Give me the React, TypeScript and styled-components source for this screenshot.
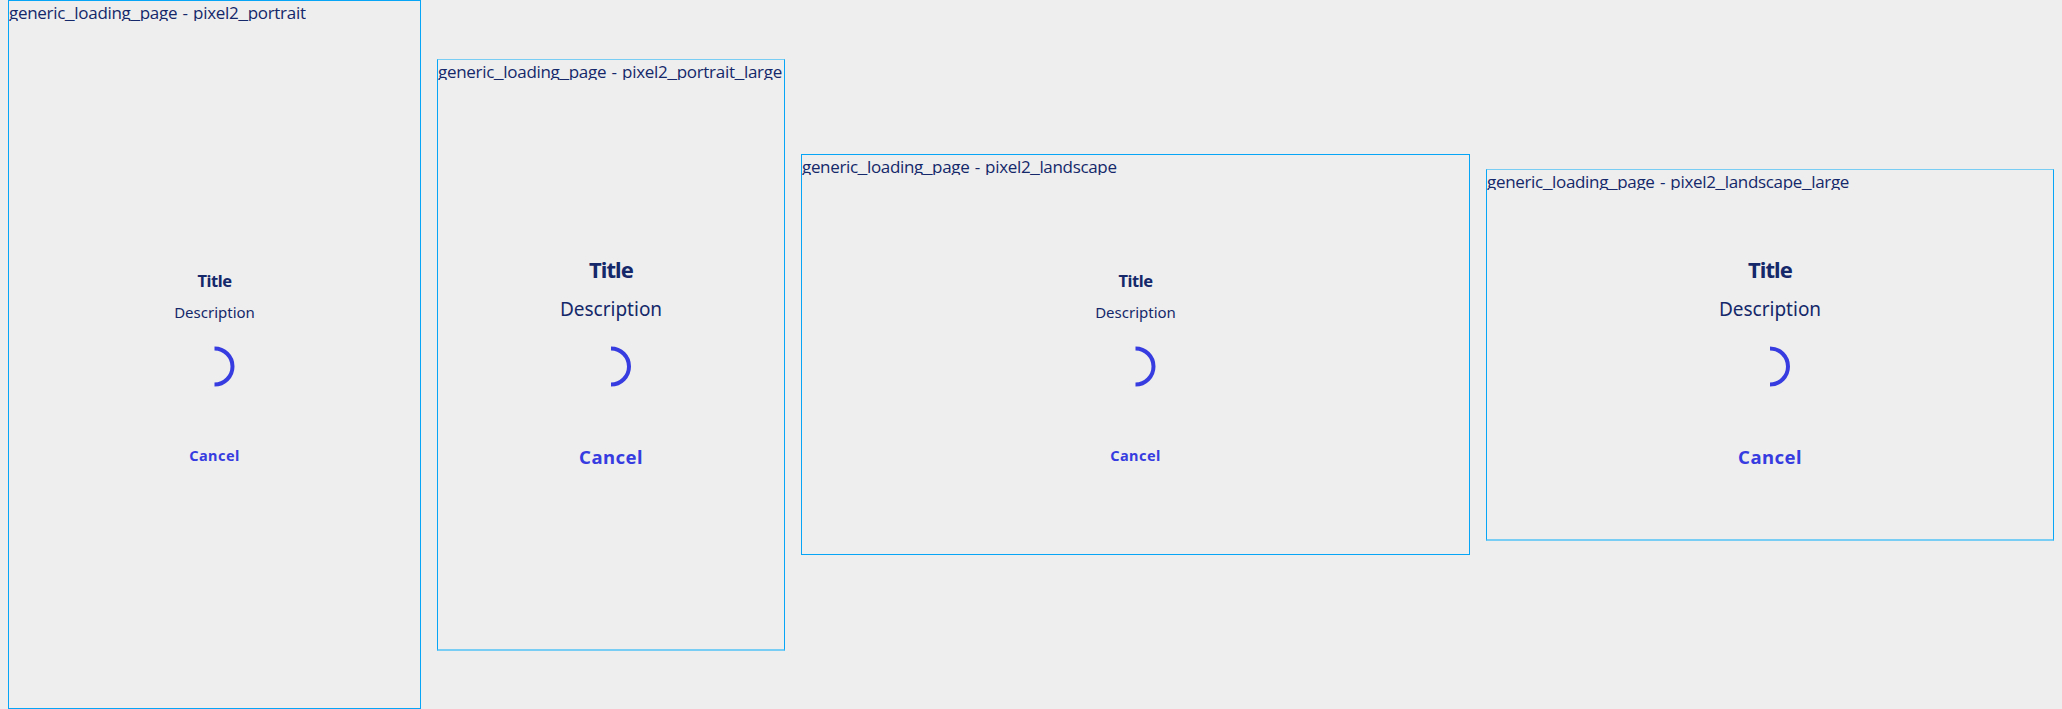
import React from "react";
import styled, { createGlobalStyle, css } from "styled-components";

const NAVY = "#14286a";
const ACCENT = "#363ce0";
const OUTLINE = "#06a5f5";
const OUTLINE_SOFT = "#78cdf5";

const GlobalStyle = createGlobalStyle`
  body {
    margin: 0;
    background: #eeeeee;
    font-family: "Noto Sans", sans-serif;
    color: ${NAVY};
  }
`;

const Board = styled.main`
  display: flex;
  align-items: center;
  gap: 16px;
  width: 2062px;
  height: 709px;
  padding: 0 8px;
  box-sizing: border-box;
  overflow: hidden;
`;

const Frame = styled.section<{ $width: number; $height: number; $soft: boolean }>`
  position: relative;
  display: flex;
  flex-direction: column;
  align-items: center;
  justify-content: center;
  flex: none;
  box-sizing: border-box;
  width: ${(p) => p.$width}px;
  height: ${(p) => p.$height}px;
  border: 1px solid ${OUTLINE};
  ${(p) =>
    p.$soft &&
    css`
      margin-top: 1px;
      border-top-color: ${OUTLINE_SOFT};
      border-bottom: 2px solid ${OUTLINE_SOFT};
      padding-top: 1px;
    `}
`;

const Label = styled.div<{ $tracking: number }>`
  position: absolute;
  top: 0;
  left: 0;
  height: 20px;
  overflow: hidden;
  white-space: nowrap;
  font-family: "Open Sans", "Noto Sans", sans-serif;
  font-size: 17px;
  line-height: 23px;
  letter-spacing: ${(p) => p.$tracking}px;
  word-spacing: 1.2px;
`;

const Underscore = styled.span`
  font-family: "Liberation Sans", sans-serif;
  line-height: 0;
  vertical-align: 1px;
`;

const Content = styled.div<{ $large: boolean }>`
  display: flex;
  flex-direction: column;
  align-items: center;
  padding-top: ${(p) => (p.$large ? 14 : 25)}px;
`;

const Title = styled.h1<{ $large: boolean }>`
  margin: 0;
  font-weight: 700;
  font-size: ${(p) => (p.$large ? 22 : 16.5)}px;
  line-height: ${(p) => (p.$large ? 30 : 23)}px;
  letter-spacing: ${(p) => (p.$large ? -0.9 : -0.45)}px;
`;

const Description = styled.p<{ $large: boolean }>`
  margin: ${(p) => (p.$large ? 12 : 10)}px 0 24px;
  font-size: ${(p) => (p.$large ? 19 : 15)}px;
  line-height: ${(p) => (p.$large ? 26 : 20)}px;
`;

const Spinner = styled.svg`
  display: block;
  height: 41px;
  fill: none;
  stroke: ${ACCENT};
  stroke-width: 4px;
`;

const Cancel = styled.button<{ $large: boolean }>`
  margin: ${(p) => (p.$large ? 57 : 58)}px 0 0;
  padding: 0;
  border: 0;
  background: none;
  color: ${ACCENT};
  font-family: inherit;
  font-weight: 700;
  font-size: ${(p) => (p.$large ? 18.5 : 14.5)}px;
  line-height: ${(p) => (p.$large ? 26 : 20)}px;
  letter-spacing: 0.45px;
`;

interface Preview {
  device: string;
  width: number;
  height: number;
  large: boolean;
  tracking: number;
}

const previews: Preview[] = [
  { device: "pixel2_portrait", width: 413, height: 709, large: false, tracking: -0.29 },
  { device: "pixel2_portrait_large", width: 348, height: 592, large: true, tracking: -0.29 },
  { device: "pixel2_landscape", width: 669, height: 401, large: false, tracking: -0.33 },
  { device: "pixel2_landscape_large", width: 568, height: 372, large: true, tracking: -0.32 },
];

function LabelText({ text }: { text: string }) {
  return (
    <>
      {text.split("_").map((part, i) => (
        <React.Fragment key={i}>
          {i > 0 && <Underscore>_</Underscore>}
          {part}
        </React.Fragment>
      ))}
    </>
  );
}

function LoadingPage({ large }: { large: boolean }) {
  const width = large ? 40 : 41;
  return (
    <Content $large={large}>
      <Title $large={large}>Title</Title>
      <Description $large={large}>Description</Description>
      <Spinner width={width} viewBox={`0 0 ${width} 41`} aria-label="Loading">
        <path d={`M${width / 2} 2.5a18 18 0 0 1 0 36`} />
      </Spinner>
      <Cancel $large={large}>Cancel</Cancel>
    </Content>
  );
}

export default function App() {
  return (
    <>
      <GlobalStyle />
      <Board>
        {previews.map((p) => (
          <Frame key={p.device} $width={p.width} $height={p.height} $soft={p.large}>
            <Label $tracking={p.tracking}>
              <LabelText text={`generic_loading_page - ${p.device}`} />
            </Label>
            <LoadingPage large={p.large} />
          </Frame>
        ))}
      </Board>
    </>
  );
}
